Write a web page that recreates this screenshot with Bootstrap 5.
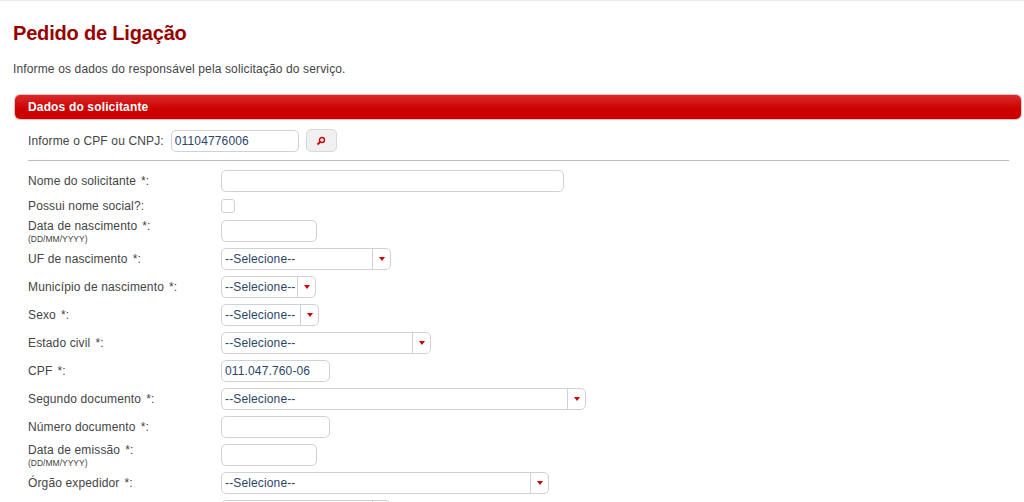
<!DOCTYPE html>
<html lang="pt-BR">
<head>
<meta charset="utf-8">
<title>Pedido de Ligação</title>
<link href="https://cdn.jsdelivr.net/npm/bootstrap@5.3.0/dist/css/bootstrap.min.css" rel="stylesheet">
<style>
html,body{height:502px;overflow:hidden}
body{font-family:"Liberation Sans",Arial,sans-serif;font-size:12px;color:#444;background:#fff;border-top:1px solid #e8e8e8}
.pg-title{font-size:20px;font-weight:700;color:#990000;line-height:24px;margin:20px 0 0 13px;letter-spacing:-.18px}
.pg-intro{font-size:12px;line-height:14px;color:#444;margin:17px 0 0 13px;letter-spacing:.14px}
.pg-bar{margin:19px 3px 0 15px;height:24px;background:linear-gradient(#d92a2a,#cc0000 60%);border-radius:5px;color:#fff;font-weight:700;font-size:12px;letter-spacing:.15px;line-height:24px;padding-left:13px;box-shadow:0 0 0 1px #f0c0c0}
.pg-body{margin:0 15px 0 28px}
.lbl{color:#444;letter-spacing:.14px;line-height:14px}
.lbl-top{margin-right:7px}
.lbl-col{width:193px;flex:none}
.hint{display:block;font-size:8.5px;line-height:8px;letter-spacing:0;margin-top:2px}
.ast{margin-left:5px}
.fld{height:22px;border:1px solid #ccd2d8;border-radius:5px;background:#fff;color:#2c4668;font-size:12px;line-height:20px;padding:0 3px;font-family:inherit;letter-spacing:.14px;outline:0}
.cmb{display:flex;align-items:stretch}
.cmb-txt{flex:1;min-width:0;white-space:nowrap;overflow:hidden}
.cmb-arr{width:18px;flex:none;border-left:1px solid #ccd2d8;margin-right:-3px;display:flex;align-items:center;justify-content:center}
.cmb-arr::after{content:"";border:3.5px solid transparent;border-top:4px solid #cc0000;border-bottom:0}
.chk{width:14px;height:14px;border:1px solid #ccd2d8;border-radius:3px;background:#fff}
.srch{width:31px;height:23px;border:1px solid #d8d8d8;border-radius:5px;background:#f0f0f0;padding:0;margin-left:7px}
.pg-rule{height:1px;background:#b9bec2;margin:8px 0 0;opacity:1;border:0}
.r1{margin-top:10px;height:23px}
.frow{display:flex;align-items:center}
.w-cpf{width:128px}.w-96{width:96px}.w-343{width:343px}.w-170{width:170px}.w-95{width:95px}.w-98{width:98px}.w-210{width:210px}.w-109{width:109px}.w-365{width:365px}.w-328{width:328px}
.h-r{height:28px}.h-p{height:22px}
.t1{margin-top:6px}
</style>
</head>
<body>
<h1 class="pg-title">Pedido de Ligação</h1>
<p class="pg-intro">Informe os dados do responsável pela solicitação do serviço.</p>
<div class="pg-bar">Dados do solicitante</div>
<div class="pg-body">
  <div class="d-flex align-items-center r1">
    <label class="lbl lbl-top" for="cpfBusca">Informe o CPF ou CNPJ:</label>
    <input id="cpfBusca" class="fld w-cpf" value="01104776006">
    <button class="srch d-flex align-items-center justify-content-center" type="button" aria-label="Buscar">
      <svg width="10" height="10" viewBox="0 0 10 10"><circle cx="6" cy="4" r="2.5" fill="none" stroke="#cc0000" stroke-width="1.4"/><path d="M4.2 5.8 1.5 8.5" stroke="#cc0000" stroke-width="1.8"/></svg>
    </button>
  </div>
  <hr class="pg-rule">
  <div class="t1">
    <div class="frow h-r"><div class="lbl lbl-col">Nome do solicitante<span class="ast">*:</span></div><input class="fld w-343"></div>
    <div class="frow h-p"><div class="lbl lbl-col">Possui nome social?:</div><div class="chk"></div></div>
    <div class="frow h-r"><div class="lbl lbl-col">Data de nascimento<span class="ast">*:</span><span class="hint">(DD/MM/YYYY)</span></div><input class="fld w-96"></div>
    <div class="frow h-r"><div class="lbl lbl-col">UF de nascimento<span class="ast">*:</span></div><div class="fld cmb w-170"><span class="cmb-txt">--Selecione--</span><span class="cmb-arr"></span></div></div>
    <div class="frow h-r"><div class="lbl lbl-col">Município de nascimento<span class="ast">*:</span></div><div class="fld cmb w-95"><span class="cmb-txt">--Selecione--</span><span class="cmb-arr"></span></div></div>
    <div class="frow h-r"><div class="lbl lbl-col">Sexo<span class="ast">*:</span></div><div class="fld cmb w-98"><span class="cmb-txt">--Selecione--</span><span class="cmb-arr"></span></div></div>
    <div class="frow h-r"><div class="lbl lbl-col">Estado civil<span class="ast">*:</span></div><div class="fld cmb w-210"><span class="cmb-txt">--Selecione--</span><span class="cmb-arr"></span></div></div>
    <div class="frow h-r"><div class="lbl lbl-col">CPF<span class="ast">*:</span></div><input class="fld w-109" value="011.047.760-06"></div>
    <div class="frow h-r"><div class="lbl lbl-col">Segundo documento<span class="ast">*:</span></div><div class="fld cmb w-365"><span class="cmb-txt">--Selecione--</span><span class="cmb-arr"></span></div></div>
    <div class="frow h-r"><div class="lbl lbl-col">Número documento<span class="ast">*:</span></div><input class="fld w-109"></div>
    <div class="frow h-r"><div class="lbl lbl-col">Data de emissão<span class="ast">*:</span><span class="hint">(DD/MM/YYYY)</span></div><input class="fld w-96"></div>
    <div class="frow h-r"><div class="lbl lbl-col">Órgão expedidor<span class="ast">*:</span></div><div class="fld cmb w-328"><span class="cmb-txt">--Selecione--</span><span class="cmb-arr"></span></div></div>
    <div class="frow h-r"><div class="lbl lbl-col"></div><div class="fld cmb w-170"><span class="cmb-txt"></span><span class="cmb-arr"></span></div></div>
  </div>
</div>
<script src="https://cdn.jsdelivr.net/npm/bootstrap@5.3.0/dist/js/bootstrap.bundle.min.js"></script>
</body>
</html>
